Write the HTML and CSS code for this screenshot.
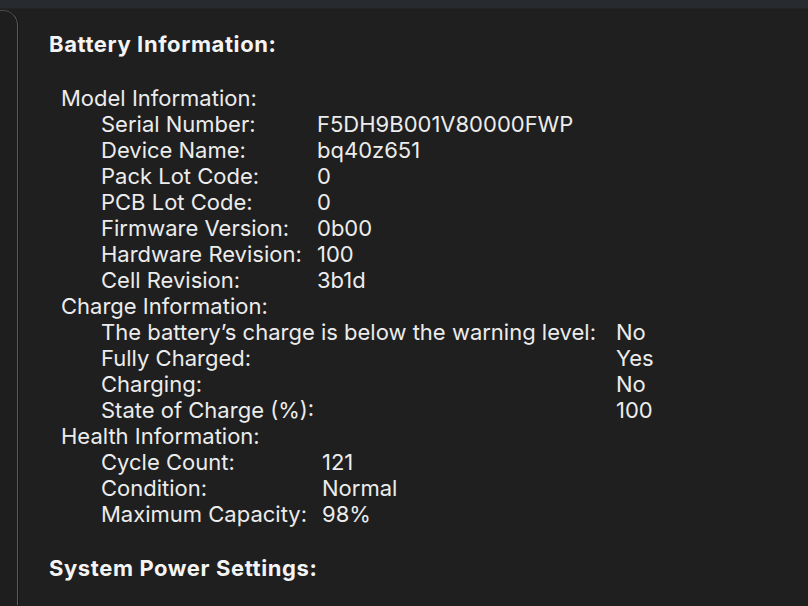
FILE: index.html
```html
<!DOCTYPE html>
<html>
<head>
<meta charset="utf-8">
<link rel="stylesheet" href="styles.css">
</head>
<body>
<div class="topbar"></div>
<div class="window">
  <div class="sidebar"></div>
  <main class="content">
    <h2 class="heading">Battery Information:</h2>
    <div class="group">
      <div class="group-title">Model Information:</div>
      <div class="table model">
        <span>Serial Number:</span><span>F5DH9B001V80000FWP</span>
        <span>Device Name:</span><span>bq40z651</span>
        <span>Pack Lot Code:</span><span>0</span>
        <span>PCB Lot Code:</span><span>0</span>
        <span>Firmware Version:</span><span>0b00</span>
        <span>Hardware Revision:</span><span>100</span>
        <span>Cell Revision:</span><span>3b1d</span>
      </div>
    </div>
    <div class="group">
      <div class="group-title">Charge Information:</div>
      <div class="table charge">
        <span>The battery’s charge is below the warning level:</span><span>No</span>
        <span>Fully Charged:</span><span>Yes</span>
        <span>Charging:</span><span>No</span>
        <span>State of Charge (%):</span><span>100</span>
      </div>
    </div>
    <div class="group">
      <div class="group-title">Health Information:</div>
      <div class="table health">
        <span>Cycle Count:</span><span>121</span>
        <span>Condition:</span><span>Normal</span>
        <span>Maximum Capacity:</span><span>98%</span>
      </div>
    </div>
    <h2 class="heading heading-next">System Power Settings:</h2>
  </main>
</div>
</body>
</html>
```

FILE: styles.css
```css
* { box-sizing: border-box; }
html, body {
  margin: 0;
  padding: 0;
  height: 100%;
  background: #1f1f1f;
  overflow: hidden;
}
body {
  font-family: Inter, "Liberation Sans", sans-serif;
  color: #ececec;
  font-size: 22px;
  line-height: 26px;
}
.topbar {
  height: 9px;
  background: #272a2f;
  border-bottom: 1px solid #232426;
}
.window {
  display: flex;
  height: calc(100% - 10px);
}
.sidebar {
  width: 18px;
  flex: none;
  margin-top: 1px;
  border-right: 1.5px solid #5b5b5b;
  border-top: 1.5px solid #4a4a4a;
  border-top-right-radius: 15px;
  background: #1e1e1e;
  box-shadow: 1px 0 0 #151515;
}
.content {
  padding: 22px 0 0 31px;
  flex: 1;
}
.heading {
  margin: 0;
  font-size: 22px;
  line-height: 26px;
  font-weight: 700;
  color: #f4f4f4;
  letter-spacing: 0.6px;
}
.group:first-of-type { margin-top: 28px; }
.group-title {
  padding-left: 12px;
}
.table {
  display: grid;
  padding-left: 52px;
}
.model { grid-template-columns: 216px auto; }
.charge { grid-template-columns: 515px auto; }
.health { grid-template-columns: 221px auto; }
.heading-next { margin-top: 28px; }
```
